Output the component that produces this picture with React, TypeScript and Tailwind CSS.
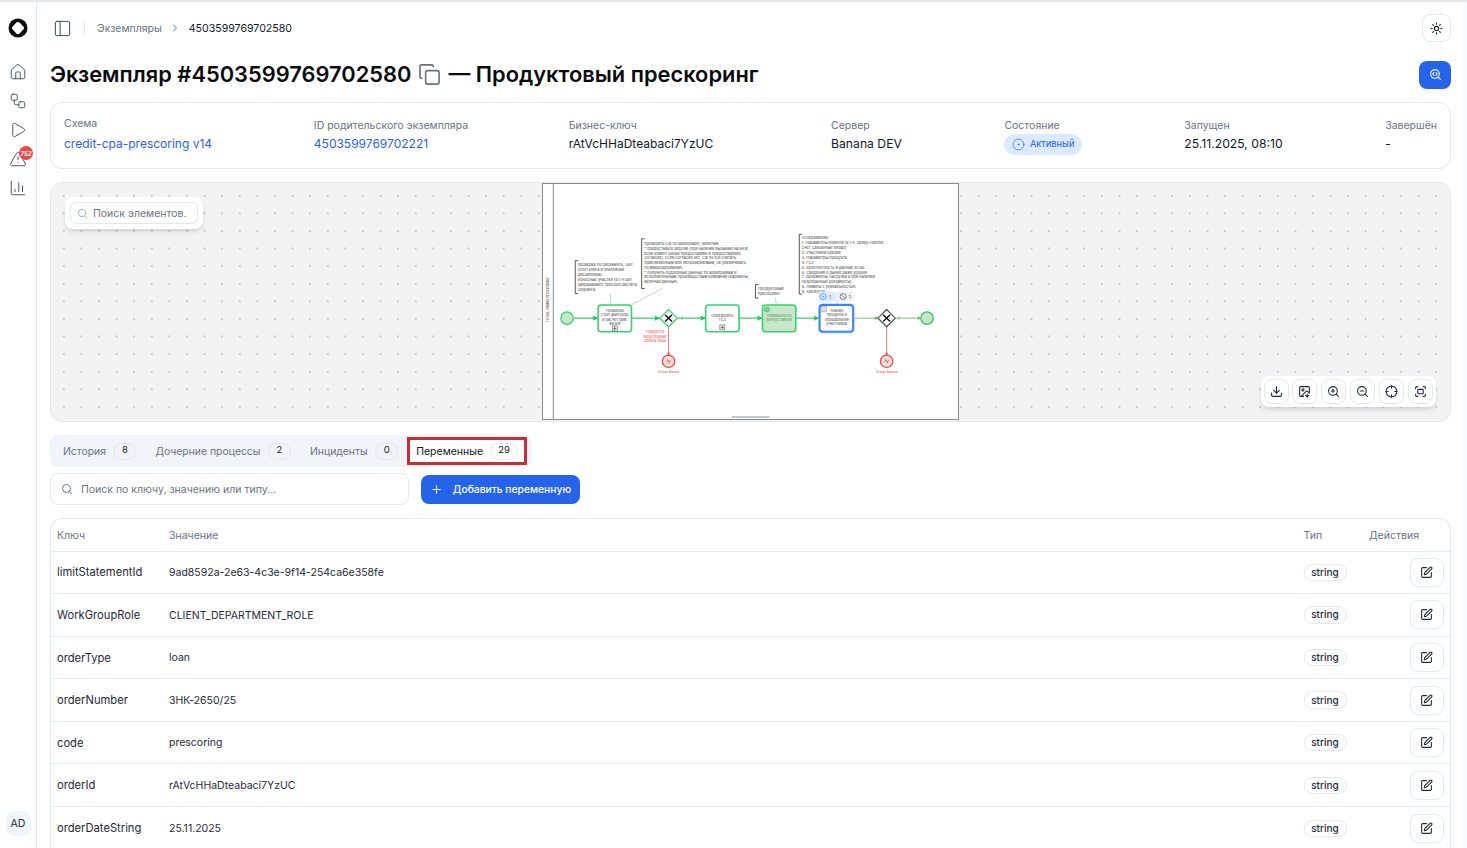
import React from "react";
import {
  ChevronRight,
  Copy,
  Crosshair,
  Download,
  ImageDown,
  PanelLeft,
  Plus,
  Search,
  SearchCode,
  SquarePen,
  Sun,
  ZoomIn,
  ZoomOut,
  House,
  Play,
  TriangleAlert,
  ChartColumn,
  Workflow,
  CircleDot,
} from "lucide-react";

const FONT = "font-['Inter','Noto_Sans',sans-serif]";

const rows = [
  ["limitStatementId", "9ad8592a-2e63-4c3e-9f14-254ca6e358fe"],
  ["WorkGroupRole", "CLIENT_DEPARTMENT_ROLE"],
  ["orderType", "loan"],
  ["orderNumber", "ЗНК-2650/25"],
  ["code", "prescoring"],
  ["orderId", "rAtVcHHaDteabaci7YzUC"],
  ["orderDateString", "25.11.2025"],
];

const tabs = [
  { label: "История", count: 8 },
  { label: "Дочерние процессы", count: 2 },
  { label: "Инциденты", count: 0 },
];

const note1 = [
  "проверка по рискам/КБ, ЦБТ",
  "(спот книга и платежная",
  "дисциплина).",
  "Износные участки (в т.ч ЦБТ",
  "запрашивают прескор расчёта",
  "скоринга",
];

const note2 = [
  "проверить СФ по календарю, включая:",
  "* предоставьте версии (при наличии вызываю на БКИ,",
  "если клиент ранее предоставлял и предоставляло",
  "согласие). Если согласия нет, СФ по КИ считать",
  "приближенным или непроверяемым, не увеличивать",
  "по микродержанию;",
  "* получить подробные данные по арбитражам и",
  "исполнительным производствам компании (варианты,",
  "включая данные)",
];

const note3 = [
  "Отображение:",
  "1. Параметры клиента (в т.ч. opKey+IdentId",
  "счет, связанные лизфо)",
  "2. Участники сделки",
  "3. Параметры продукта",
  "4. ГСЗ",
  "5. Бухотчетность и данные из ББ",
  "6. Сведения о рынке даже уровня",
  "7. Документы (загрузка и при наличии",
  "подобранные документы)",
  "8. Лимиты с уникальностью",
  "9. Арбитраж",
];

function Note({ x, y, h, top, lines, step }: { x: number; y: number; h: number; top: number; lines: string[]; step: number }) {
  return (
    <g>
      <path d={`M${x + 3} ${y}H${x}V${y + h}H${x + 3}`} fill="none" stroke="#444" strokeWidth="0.9" />
      {lines.map((l, i) => (
        <text key={i} x={x + 2.5} y={top + i * step} fontSize="3.9" fill="#444">
          {l}
        </text>
      ))}
    </g>
  );
}

function Gateway({ cx, cy, stroke }: { cx: number; cy: number; stroke: string }) {
  return (
    <g>
      <path d={`M${cx} ${cy - 8.7}L${cx + 8.7} ${cy}L${cx} ${cy + 8.7}L${cx - 8.7} ${cy}Z`} fill="#fff" stroke={stroke} strokeWidth="1.2" />
      <path d={`M${cx - 3.5} ${cy - 3.5}L${cx + 3.5} ${cy + 3.5}M${cx + 3.5} ${cy - 3.5}L${cx - 3.5} ${cy + 3.5}`} stroke="#111" strokeWidth="1.4" />
    </g>
  );
}

function ErrorEnd({ cx, cy, label }: { cx: number; cy: number; label: string }) {
  return (
    <g>
      <circle cx={cx} cy={cy} r="6.2" fill="#fde2e2" stroke="#ef4444" strokeWidth="1.3" />
      <path d={`M${cx - 3} ${cy + 3}L${cx - 1} ${cy - 2.5}L${cx + 0.8} ${cy + 0.8}L${cx + 3} ${cy - 3}L${cx + 1} ${cy + 2.5}L${cx - 0.8} ${cy - 0.8}Z`} fill="#ef4444" />
      <text x={cx} y={cy + 11.5} fontSize="3.6" fill="#ef4444" textAnchor="middle">
        {label}
      </text>
    </g>
  );
}

function TaskLabel({ x, y, lines, fill = "#444" }: { x: number; y: number; lines: string[]; fill?: string }) {
  return (
    <>
      {lines.map((l, i) => (
        <text key={i} x={x} y={y + i * 4.4} fontSize="3.7" fill={fill} textAnchor="middle">
          {l}
        </text>
      ))}
    </>
  );
}

function Marker({ x, y }: { x: number; y: number }) {
  return (
    <g>
      <rect x={x - 2.5} y={y - 2.5} width="5" height="5" fill="#eee" stroke="#555" strokeWidth="0.5" />
      <path d={`M${x - 1.6} ${y}H${x + 1.6}M${x} ${y - 1.6}V${y + 1.6}`} stroke="#333" strokeWidth="0.6" />
    </g>
  );
}

function Arrow({ x, y }: { x: number; y: number }) {
  return <path d={`M${x} ${y}l-5 -2.6v5.2z`} fill="#22c55e" />;
}

function Diagram() {
  return (
    <svg viewBox="543 183 416 236" className="h-full w-full" fontFamily="Inter, sans-serif">
      <line x1="553" y1="183" x2="553" y2="419" stroke="#888" strokeWidth="1" />
      <text x="0" y="0" fontSize="3.7" fill="#444" transform="translate(549 322) rotate(-90)">
        Точка: лимит прескоринг
      </text>

      {/* flows */}
      <g stroke="#34d36e" strokeWidth="1.3" fill="none">
        <path d="M573 317.7H598M632 317.7H660M677.5 317.7H706M740 317.7H763M797 317.7H820" />
      </g>
      <g stroke="#8fd09e" strokeWidth="1.2" fill="none">
        <path d="M854 317.7H879M896.5 317.7H922" />
      </g>
      <path d="M681.5 319.5l1.5 -3.5M899 319.5l1.5 -3.5" stroke="#22c55e" strokeWidth="0.6" />
      <Arrow x={598} y={317.7} />
      <Arrow x={660} y={317.7} />
      <Arrow x={706} y={317.7} />
      <Arrow x={763} y={317.7} />
      <Arrow x={820} y={317.7} />
      <path d="M879 317.7l-3 -1.7v3.4zM922 317.7l-3 -1.7v3.4z" fill="#4caf50" />

      {/* red flows */}
      <path d="M668.7 326.4V355M887.7 326.4V355" stroke="#f47c7c" strokeWidth="1" />
      <path d="M668.7 355l-1.5 -2.5h3zM887.7 355l-1.5 -2.5h3z" fill="#ef4444" />
      <TaskLabel x={655} y={333} lines={["Требуется", "безусловная", "оплата лица"]} fill="#ef4444" />

      {/* notes */}
      <Note x={575} y={260} h={33} top={265} lines={note1} step={5} />
      <Note x={641.7} y={238} h={50} top={244.5} lines={note2} step={4.75} />
      <Note x={800} y={233.5} h={60} top={238.3} lines={note3} step={4.95} />
      <Note x={756} y={284} h={13.5} top={289.5} lines={["Продуктовый", "прескоринг"]} step={4.6} />
      <path d="M610 293L611 304M632 304L662 288M776 297.5L777 304M838 293V304" stroke="#666" strokeWidth="0.5" strokeDasharray="1 0.5" fill="none" />

      {/* events */}
      <circle cx="566.7" cy="317.7" r="6.2" fill="#c8e6c9" stroke="#34d36e" strokeWidth="1.3" />
      <circle cx="928.3" cy="317.7" r="6.2" fill="#c8e6c9" stroke="#34c065" strokeWidth="1.3" />

      {/* tasks */}
      <rect x="598" y="304.5" width="33.5" height="26.8" rx="3" fill="#fff" stroke="#34d36e" strokeWidth="1.6" />
      <TaskLabel x={614.7} y={311.5} lines={["Проверка", "стоп-факторов", "и расчет рем.", "жизни"]} />
      <Marker x={614.7} y={328} />

      <Gateway cx={668.7} cy={317.7} stroke="#34d36e" />

      <rect x="706" y="304.5" width="33.5" height="26.8" rx="3" fill="#fff" stroke="#34d36e" strokeWidth="1.6" />
      <TaskLabel x={722.7} y={316.5} lines={["Определить", "ГСЗ"]} />
      <Marker x={722.7} y={327} />

      <rect x="763" y="304.5" width="33.5" height="26.8" rx="3" fill="#c8e6c9" stroke="#34d36e" strokeWidth="1.6" />
      <circle cx="767.5" cy="309" r="2.6" fill="#86c994" stroke="#22c55e" strokeWidth="0.5" />
      <TaskLabel x={779.7} y={316.5} lines={["Уникальность", "контур заявки"]} fill="#4f9a5c" />

      <rect x="820.5" y="304.5" width="33.5" height="26.8" rx="3" fill="#fff" stroke="#93c5fd" strokeWidth="3" />
      <rect x="820.5" y="304.5" width="33.5" height="26.8" rx="3" fill="#fff" stroke="#3b82f6" strokeWidth="1.8" />
      <rect x="822.5" y="306" width="5" height="5.5" fill="#ddd" stroke="#777" strokeWidth="0.3" />
      <TaskLabel x={837.7} y={311.5} lines={["Анализ", "продукта и", "определения", "участников"]} />

      <Gateway cx={887.7} cy={317.7} stroke="#555" />

      <ErrorEnd cx={668.7} cy={361} label="Отказ Банка" />
      <ErrorEnd cx={887.7} cy={361} label="Отказ Банка" />

      {/* overlays */}
      <rect x="819" y="291" width="18" height="10" rx="2.5" fill="#dbeafe" />
      <rect x="837" y="291" width="18" height="10" rx="2.5" fill="#f1f1f3" />
      <circle cx="824" cy="296" r="3" fill="none" stroke="#3b82f6" strokeWidth="0.7" />
      <circle cx="824" cy="296" r="0.7" fill="#3b82f6" />
      <text x="829.5" y="298" fontSize="5.5" fill="#3b82f6">1</text>
      <circle cx="844" cy="296" r="3" fill="none" stroke="#555" strokeWidth="0.7" />
      <path d="M842 294l4 4" stroke="#555" strokeWidth="0.7" />
      <text x="849.5" y="298" fontSize="5.5" fill="#555">1</text>

      {/* scrollbar */}
      <rect x="732" y="416" width="38" height="2" fill="#c4c8ce" />
    </svg>
  );
}

function ToolButton({ children }: { children: React.ReactNode }) {
  return (
    <button className="flex h-[25px] w-[25px] items-center justify-center rounded-lg border border-[#e2e8f0] bg-white text-[#1f2937]">
      {children}
    </button>
  );
}

function Info({ label, children, className = "" }: { label: string; children: React.ReactNode; className?: string }) {
  return (
    <div className={`flex flex-col ${className}`}>
      <span className="text-[10.5px] leading-[15px] text-[#6b7280]">{label}</span>
      {children}
    </div>
  );
}

export default function App() {
  return (
    <div className={`flex h-[848px] w-[1467px] overflow-hidden border-t-2 border-[#e5e7eb] bg-white ${FONT}`}>
      {/* Боковая панель */}
      <aside className="flex w-[37px] shrink-0 flex-col items-center border-r border-[#e2e8f0] pb-[12px] pt-[16px]">
        <svg width="20" height="20" viewBox="0 0 20 20" className="mb-[25px]">
          <circle cx="10" cy="10" r="9.5" fill="#0b0b0f" />
          <path transform="translate(10 10) scale(1.1) translate(-10 -10)" d="M10 4.5Q10.8 4.5 11.4 5.1L14.9 8.6Q16.3 10 14.9 11.4L11.4 14.9Q10 16.3 8.6 14.9L5.1 11.4Q3.7 10 5.1 8.6L8.6 5.1Q9.2 4.5 10 4.5Z" fill="#fff" />
        </svg>
        <div className="flex flex-col items-center gap-[11px] text-[#4b5563]">
          <House size={18} strokeWidth={1.3} />
          <Workflow size={18} strokeWidth={1.3} />
          <Play size={18} strokeWidth={1.3} />
          <div className="relative">
            <TriangleAlert size={18} strokeWidth={1.3} />
            <span className="absolute right-[-6px] top-[-4px] flex h-[14px] w-[14px] items-center justify-center rounded-full bg-[#ef4444] text-[6px] font-bold italic text-white">
              752
            </span>
          </div>
          <ChartColumn size={18} strokeWidth={1.3} />
        </div>
        <div className="mt-auto flex h-[25px] w-[25px] items-center justify-center rounded-lg bg-[#f1f5f9] text-[10.5px] text-[#1f2937]">
          AD
        </div>
      </aside>

      {/* Основная часть */}
      <main className="flex min-w-0 flex-1 flex-col pl-[13px] pr-[12px]">
        <header className="flex h-[52px] shrink-0 items-center">
          <PanelLeft size={19} strokeWidth={1.2} className="ml-[3px] text-[#374151]" />
          <div className="ml-[12px] h-[14px] w-px bg-[#e2e8f0]" />
          <span className="ml-[12px] pt-[1px] text-[10.5px] text-[#6b7280]">Экземпляры</span>
          <ChevronRight size={12} className="ml-[7px] mr-[8px] text-[#6b7280]" />
          <span className="pt-[1px] text-[10.6px] text-[#111827]">4503599769702580</span>
          <button className="ml-auto flex h-[28px] w-[29px] items-center justify-center rounded-lg border border-[#e2e8f0]">
            <Sun size={13} className="text-[#111827]" />
          </button>
        </header>

        <div className="flex h-[41px] shrink-0 items-center">
          <h1 className="text-[21.85px] font-semibold leading-none text-[#0b0b0f]">Экземпляр #4503599769702580</h1>
          <Copy size={23} strokeWidth={1.7} className="ml-[7px] mr-[7px] text-[#6b7280]" />
          <span className="text-[21.85px] font-semibold leading-none text-[#0b0b0f]">— Продуктовый прескоринг</span>
          <button className="ml-auto flex h-[28px] w-[32px] items-center justify-center rounded-lg bg-[#2563eb] text-white">
            <SearchCode size={13} />
          </button>
        </div>

        <section className="mt-[7px] flex h-[66.5px] shrink-0 items-center rounded-xl border border-[#e2e8f0] px-[13px]">
          <Info label="Схема" className="w-[250px] -translate-y-[1px] gap-[4px]">
            <span className="text-[12px] leading-[17px] text-[#2563eb]">credit-cpa-prescoring v14</span>
          </Info>
          <Info label="ID родительского экземпляра" className="w-[255px] gap-[2px]">
            <span className="text-[12px] leading-[17px] text-[#2563eb]">4503599769702221</span>
          </Info>
          <Info label="Бизнес-ключ" className="w-[262.5px] gap-[2px]">
            <span className="text-[12px] leading-[17px] text-[#111827]">rAtVcHHaDteabaci7YzUC</span>
          </Info>
          <Info label="Сервер" className="w-[173.5px] gap-[2px]">
            <span className="text-[12.2px] leading-[17px] text-[#111827]">Banana DEV</span>
          </Info>
          <Info label="Состояние" className="w-[180px] translate-y-[1px] gap-[1px]">
            <span className="ml-[-0.5px] flex h-[21px] w-[78px] items-center gap-[5px] rounded-full bg-[#dbeafe] pl-[8px] text-[9.3px] text-[#2563eb]">
              <CircleDot size={13} strokeWidth={1.3} />
              Активный
            </span>
          </Info>
          <Info label="Запущен" className="w-[201px] gap-[2px]">
            <span className="text-[12.2px] leading-[17px] text-[#111827]">25.11.2025, 08:10</span>
          </Info>
          <Info label="Завершён" className="gap-[2px]">
            <span className="text-[12px] leading-[17px] text-[#111827]">-</span>
          </Info>
        </section>

        {/* Схема процесса */}
        <section className="relative mt-[13.5px] flex h-[239.5px] shrink-0 justify-center overflow-hidden rounded-xl border border-[#e5e7eb] bg-[#f3f3f4] bg-[radial-gradient(#c8cacd_1px,transparent_1.2px)] bg-[size:17.6px_17.6px] bg-[position:4px_4px]">
          <div className="h-[237px] w-[417px] border border-[#8a8a8a] bg-white">
            <Diagram />
          </div>
          <div className="absolute left-[14px] top-[14px] rounded-lg bg-white p-[5px] shadow-md">
            <div className="flex h-[22px] w-[128px] items-center gap-[5px] rounded-md border border-[#e2e8f0] px-[6px] pt-[1px] text-[10.5px] text-[#6b7280]">
              <Search size={11} className="text-[#9ca3af]" />
              Поиск элементов.
            </div>
          </div>
          <div className="absolute bottom-[14px] right-[14.5px] flex gap-[3.8px] rounded-lg bg-white p-[3px] shadow-md">
            <ToolButton><Download size={13} /></ToolButton>
            <ToolButton><ImageDown size={13} /></ToolButton>
            <ToolButton><ZoomIn size={13} /></ToolButton>
            <ToolButton><ZoomOut size={13} /></ToolButton>
            <ToolButton><Crosshair size={13} /></ToolButton>
            <ToolButton>
              <svg width="13" height="13" viewBox="0 0 24 24" fill="none" stroke="currentColor" strokeWidth="2" strokeLinecap="round" strokeLinejoin="round">
                <path d="M3 7V5a2 2 0 0 1 2-2h2M17 3h2a2 2 0 0 1 2 2v2M21 17v2a2 2 0 0 1-2 2h-2M7 21H5a2 2 0 0 1-2-2v-2" />
                <rect x="7" y="8" width="10" height="8" rx="1" />
              </svg>
            </ToolButton>
          </div>
        </section>

        {/* Вкладки */}
        <div className="mt-[13.5px] flex h-[32px] w-fit shrink-0 items-center rounded-lg bg-[#f1f5f9] pl-[13px] pr-[5px]">
          {tabs.map((t) => (
            <div key={t.label} className="mr-[19px] flex items-center gap-[7.5px] pt-[1px] text-[10.4px] text-[#6b7280]">
              {t.label}
              <span className="flex h-[17px] w-[23px] items-center justify-center rounded-full border border-[#e2e8f0] pb-[2px] text-[9.5px] text-[#111827]">
                {t.count}
              </span>
            </div>
          ))}
          <div className="ml-[-10px] flex h-[28px] w-[119.5px] items-center gap-[7px] border-[3px] border-[#c62f36] bg-white pl-[6px] text-[10.5px] text-[#111827]">
            <span className="pt-[1px]">Переменные</span>
            <span className="flex h-[17px] w-[28px] items-center justify-center rounded-full border border-[#e2e8f0] pb-[2px] text-[9.5px]">
              29
            </span>
          </div>
        </div>

        <div className="mt-[6px] flex shrink-0 items-center gap-[12px]">
          <div className="flex h-[32px] w-[359px] items-center gap-[8px] rounded-lg border border-[#e2e8f0] px-[10px] text-[10.5px] text-[#6b7280]">
            <Search size={12} />
            <span className="pt-[1px]">Поиск по ключу, значению или типу...</span>
          </div>
          <button className="flex h-[29px] w-[159px] items-center justify-center gap-[10px] rounded-lg bg-[#2563eb] text-[10.3px] font-medium text-white">
            <Plus size={13} />
            <span className="pt-[1px]">Добавить переменную</span>
          </button>
        </div>

        {/* Таблица */}
        <section className="mt-[13px] flex-1 rounded-t-xl border border-b-0 border-[#e2e8f0]">
          <div className="flex h-[32.5px] items-center border-b border-[#e2e8f0] pt-[2px] text-[10.5px] text-[#6b7280]">
            <span className="w-[118px] pl-[6px]">Ключ</span>
            <span className="flex-1">Значение</span>
            <span className="w-[65.5px]">Тип</span>
            <span className="w-[81px]">Действия</span>
          </div>
          {rows.map(([key, value]) => (
            <div key={key} className="flex h-[42.6px] items-center border-b border-[#e2e8f0] text-[10.5px] text-[#1f2937] last:border-b-0">
              <span className="w-[118px] pl-[6px] pt-[1px] text-[11.2px] text-[#1f2937]">{key}</span>
              <span className="flex-1 pt-[1px]">{value}</span>
              <span className="flex w-[106px]">
                <span className="flex h-[17.5px] w-[43px] items-center justify-center rounded-full border border-[#e2e8f0] text-[10px] font-medium">
                  string
                </span>
              </span>
              <button className="mr-[6.5px] flex h-[29px] w-[34px] items-center justify-center rounded-lg border border-[#e2e8f0]">
                <SquarePen size={13} />
              </button>
            </div>
          ))}
        </section>
      </main>
      <div className="w-[4px] shrink-0 bg-[#f8fafc]" />
    </div>
  );
}
